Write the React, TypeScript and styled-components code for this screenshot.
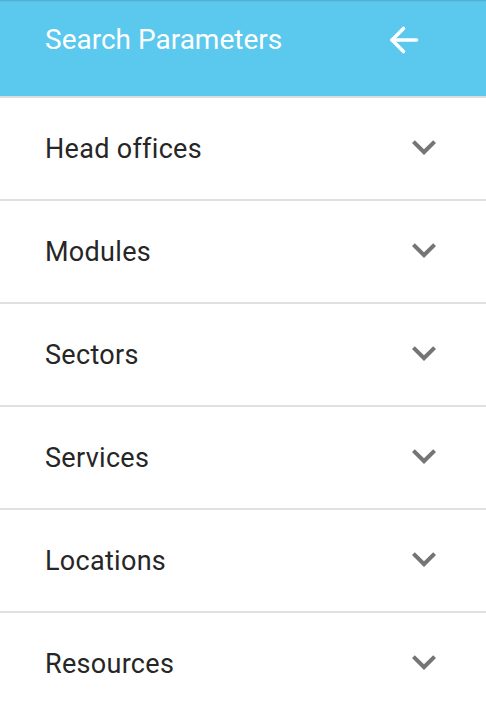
import styled, { createGlobalStyle } from "styled-components"

const GlobalStyle = createGlobalStyle`
    html, body {
        margin: 0;
        padding: 0;
        background: #ffffff;
        font-family: Roboto, "Noto Sans", Arial, sans-serif;
    }
`

const sections = ["Head offices", "Modules", "Sectors", "Services", "Locations", "Resources"]

const BackIcon = () => (
    <svg width="32" height="32" viewBox="0 0 32 32" fill="none" stroke="#ffffff" strokeWidth="3.6" strokeLinecap="round" strokeLinejoin="round">
        <line x1="4" y1="16" x2="28.5" y2="16" />
        <polyline points="15.5,4.5 4,16 15.5,27.5" />
    </svg>
)

const ChevronIcon = () => (
    <svg width="48" height="48" viewBox="0 0 24 24" fill="#757575">
        <path d="M16.59 8.59L12 13.17 7.41 8.59 6 10l6 6 6-6z" />
    </svg>
)

export default function App() {
    return (
        <>
            <GlobalStyle />
            <Panel>
                <Header>
                    <Title>Search Parameters</Title>
                    <BackButton aria-label="Back">
                        <BackIcon />
                    </BackButton>
                </Header>
                <List>
                    {sections.map((name) => (
                        <Row key={name}>
                            <Label>{name}</Label>
                            <Toggle>
                                <ChevronIcon />
                            </Toggle>
                        </Row>
                    ))}
                </List>
            </Panel>
        </>
    )
}

const Panel = styled.div`
    width: 486px;
    height: 712px;
    overflow: hidden;
    background: #ffffff;
`

const Header = styled.header`
    height: 96px;
    display: flex;
    align-items: flex-start;
    justify-content: space-between;
    padding: 0 66px 0 45px;
    background: #5bc8ee;
    border-bottom: 2px solid #dcdcdc;
    box-shadow: inset 0 3px 2px -2px rgba(0, 0, 0, 0.15);
    box-sizing: content-box;
`

const Title = styled.h1`
    margin: 24px 0 0;
    font-size: 28px;
    font-weight: 400;
    line-height: 32px;
    color: #ffffff;
`

const BackButton = styled.button`
    margin-top: 24px;
    padding: 0;
    border: none;
    background: none;
    width: 32px;
    height: 32px;
    display: flex;
`

const List = styled.div`
    display: flex;
    flex-direction: column;
`

const Row = styled.div`
    height: 101px;
    display: flex;
    align-items: center;
    justify-content: space-between;
    padding: 0 38px 0 45px;
    border-bottom: 2px solid #e0e0e0;

    &:last-child {
        border-bottom: none;
    }
`

const Label = styled.span`
    font-size: 27px;
    font-weight: 400;
    letter-spacing: 0.3px;
    color: #262626;
`

const Toggle = styled.span`
    display: flex;
    margin-top: -3px;
`
